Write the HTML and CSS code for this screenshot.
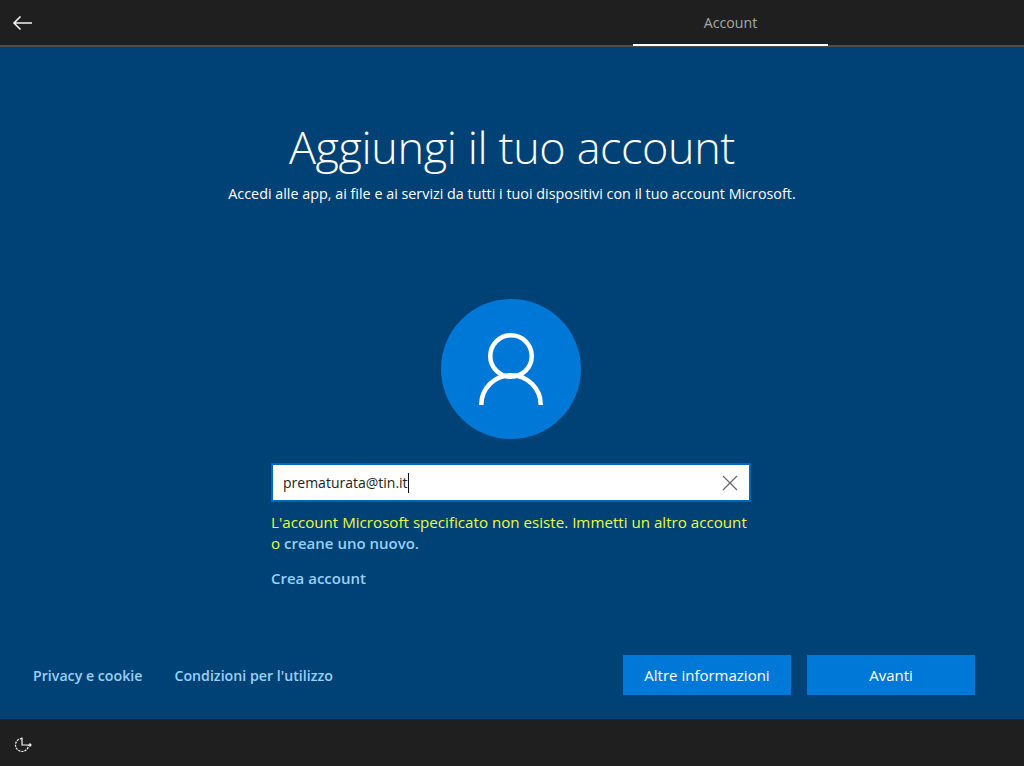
FILE: index.html
```html
<!DOCTYPE html>
<html lang="it">
<head>
<meta charset="utf-8">
<title>Aggiungi il tuo account</title>
<link rel="stylesheet" href="styles.css">
</head>
<body>
<div class="page">
  <header class="topbar">
    <svg class="back" width="21" height="16" viewBox="0 0 21 16" aria-hidden="true"><path d="M20 8H2M8.500 1.500 2 8l6.500 6.500" fill="none" stroke="#f2f2f2" stroke-width="1.600"/></svg>
    <div class="tab">Account</div>
  </header>
  <main class="main">
    <h1 class="title">Aggiungi il tuo account</h1>
    <p class="subtitle">Accedi alle app, ai file e ai servizi da tutti i tuoi dispositivi con il tuo account Microsoft.</p>
    <div class="avatar">
      <svg width="64" height="72" viewBox="0 0 64 72" aria-hidden="true">
        <circle cx="32" cy="23" r="20.750" fill="none" stroke="#fff" stroke-width="4.500"/>
        <path d="M2.250 72A29.750 29.750 0 0 1 61.750 72" fill="none" stroke="#fff" stroke-width="4.500"/>
      </svg>
    </div>
    <div class="form">
      <div class="field">
        <span class="value">prematurata@tin.it</span><span class="caret"></span>
        <svg class="clear" width="16" height="16" viewBox="0 0 16 16" aria-hidden="true"><path d="M1 1l14 14M15 1 1 15" fill="none" stroke="#666" stroke-width="1.200"/></svg>
      </div>
      <p class="error">L'account Microsoft specificato non esiste. Immetti un altro account o <a class="link" href="#">creane uno nuovo.</a></p>
      <a class="link create" href="#">Crea account</a>
    </div>
    <footer class="actions">
      <nav class="legal">
        <a class="link" href="#">Privacy e cookie</a>
        <a class="link" href="#">Condizioni per l'utilizzo</a>
      </nav>
      <div class="buttons">
        <button class="btn" type="button">Altre informazioni</button>
        <button class="btn" type="button">Avanti</button>
      </div>
    </footer>
  </main>
  <div class="bottombar">
    <svg width="18" height="18" viewBox="0 0 18 18" aria-hidden="true">
      <path d="M8 4.500A6.500 6.500 0 1 0 14.500 11" fill="none" stroke="#f5f5f5" stroke-width="1.200" stroke-dasharray="2.200 1"/>
      <path d="M8 3.500V11H17M15.500 9.500 17 11l-1.500 1.500" fill="none" stroke="#f5f5f5" stroke-width="1.200"/>
    </svg>
  </div>
</div>
</body>
</html>
```
FILE: styles.css
```css
* { box-sizing: border-box; }
html, body { margin: 0; height: 100%; }
body { font-family: "Open Sans", "Noto Sans", "Liberation Sans", sans-serif; font-size: 15px; color: #fff; background: #004275; overflow: hidden; }
.page { display: flex; flex-direction: column; height: 766px; }
.topbar { height: 47px; flex: none; background: #1f1f1f; border-bottom: 2px solid #4c4c4c; display: flex; align-items: center; padding-left: 12px; }
.back { flex: none; margin-top: 1px; }
.tab { width: 195px; height: 47px; margin-left: 600px; border-bottom: 2px solid #fff; color: #a8a8a8; text-align: center; line-height: 48px; font-size: 14.200px; flex: none; }
.main { flex: 1; display: flex; flex-direction: column; align-items: center; padding-top: 70px; }
.title { margin: 0; font-size: 45px; font-weight: 300; line-height: 60px; text-align: center; width: 1024px; letter-spacing: -0.4px; }
.subtitle { margin: 7px 0 0; font-size: 14.350px; line-height: 20px; text-align: center; width: 1020px; }
.avatar { width: 140px; height: 140px; margin: 95px 0 0 -2px; border-radius: 50%; background: #0078d7; display: flex; align-items: center; justify-content: center; flex: none; }
.form { width: 480px; margin: 24px 0 0 -2px; flex: none; }
.field { height: 39px; background: #fff; border: 2px solid #0067c0; display: flex; align-items: center; padding: 0 11px 0 10px; color: #222; font-size: 14px; }
.caret { width: 1px; height: 20px; background: #111; }
.clear { margin-left: auto; }
.error { margin: 10px 0 0; color: #ecfb3e; font-size: 15.150px; line-height: 21px; }
.link { color: #99d0f7; text-decoration: none; font-weight: 600; font-size: 14.200px; }
.error .link { font-size: 15px; }
.create { display: block; margin-top: 14px; line-height: 20px; font-size: 15px; }
.actions { margin-top: auto; margin-bottom: 24px; width: 1024px; padding: 0 49px 0 33px; display: flex; justify-content: space-between; align-items: center; }
.legal { display: flex; gap: 32px; }
.buttons { display: flex; gap: 16px; }
.btn { width: 168px; height: 40px; border: 0; background: #0078d7; color: #fff; font: inherit; padding: 0; }
.bottombar { height: 47px; flex: none; background: #1f1f1f; display: flex; align-items: center; padding-left: 14px; }
```
